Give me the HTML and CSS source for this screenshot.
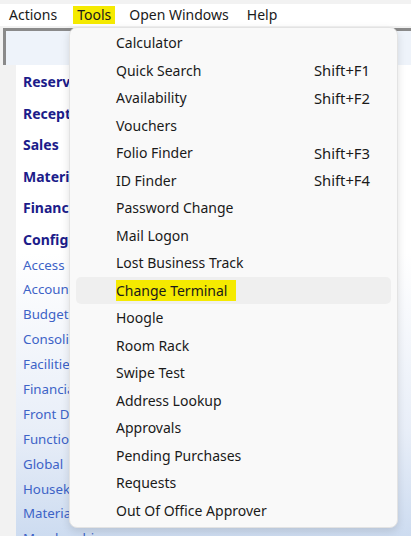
FILE: index.html
```html
<!DOCTYPE html>
<html>
<head>
<meta charset="utf-8">
<link rel="stylesheet" href="styles.css">
</head>
<body>
<div class="menubar">
  <span class="mi">Actions</span>
  <span class="mi active">Tools</span>
  <span class="mi">Open Windows</span>
  <span class="mi">Help</span>
</div>
<div class="workspace">
  <div class="frame-top"></div>
  <div class="nav">
    <div class="nav-main">
      <div class="nav-head">Reservations</div>
      <div class="nav-head">Reception</div>
      <div class="nav-head">Sales</div>
      <div class="nav-head">Materials</div>
      <div class="nav-head">Finance</div>
      <div class="nav-head">Configuration</div>
    </div>
    <div class="nav-links">
      <div class="nav-link">Access</div>
      <div class="nav-link">Accounts</div>
      <div class="nav-link">Budget</div>
      <div class="nav-link">Consolidation</div>
      <div class="nav-link">Facilities</div>
      <div class="nav-link">Financial</div>
      <div class="nav-link">Front Desk</div>
      <div class="nav-link">Functions</div>
      <div class="nav-link">Global</div>
      <div class="nav-link">Housekeeping</div>
      <div class="nav-link">Materials</div>
      <div class="nav-link">Membership</div>
    </div>
  </div>
</div>
<div class="dropdown">
  <div class="row"><span>Calculator</span></div>
  <div class="row"><span>Quick Search</span><span class="sc">Shift+F1</span></div>
  <div class="row"><span>Availability</span><span class="sc">Shift+F2</span></div>
  <div class="row"><span>Vouchers</span></div>
  <div class="row"><span>Folio Finder</span><span class="sc">Shift+F3</span></div>
  <div class="row"><span>ID Finder</span><span class="sc">Shift+F4</span></div>
  <div class="row"><span>Password Change</span></div>
  <div class="row"><span>Mail Logon</span></div>
  <div class="row"><span>Lost Business Track</span></div>
  <div class="row hover"><span class="mark">Change Terminal</span></div>
  <div class="row"><span>Hoogle</span></div>
  <div class="row"><span>Room Rack</span></div>
  <div class="row"><span>Swipe Test</span></div>
  <div class="row"><span>Address Lookup</span></div>
  <div class="row"><span>Approvals</span></div>
  <div class="row"><span>Pending Purchases</span></div>
  <div class="row"><span>Requests</span></div>
  <div class="row"><span>Out Of Office Approver</span></div>
</div>
</body>
</html>
```
FILE: styles.css
```css
html, body {
  margin: 0;
  padding: 0;
}
body {
  width: 411px;
  height: 536px;
  overflow: hidden;
  background: #f2f2f2;
  font-family: "Noto Sans", "Liberation Sans", sans-serif;
  position: relative;
}
.menubar {
  margin-top: 4px;
  height: 22px;
  background: #ffffff;
  display: flex;
  align-items: center;
  padding-left: 5px;
  font-size: 14px;
  color: #1a1a1a;
}
.mi {
  padding: 0 4px;
  margin-right: 10px;
  line-height: 18px;
}
.mi:first-child {
  margin-right: 12px;
}
.active {
  background: #f5ea00;
}
.workspace {
  margin-top: 2px;
  height: 510px;
  display: flex;
  flex-direction: column;
  overflow: hidden;
}
.frame-top {
  flex-shrink: 0;
  height: 34px;
  margin-left: 3px;
  border-top: 3px solid #8a8a8a;
  border-left: 3px solid #8a8a8a;
  background: #eef3fa;
}
.nav {
  flex: 1;
  display: flex;
  flex-direction: column;
  padding-left: 16px;
  background: #f2f2f2;
}
.nav-main {
  flex-shrink: 0;
  background: #ffffff;
  padding: 1px 0 0 7px;
}
.nav-head {
  height: 31.6px;
  line-height: 31.6px;
  font-weight: bold;
  font-size: 14px;
  color: #1c1c8a;
  white-space: nowrap;
}
.nav-links {
  flex: 1;
  margin-top: -3px;
  padding: 0 0 0 7px;
  background: linear-gradient(to bottom, #ffffff 0%, #e8eef8 60%, #c9d9ef 100%);
}
.nav-link {
  height: 24.9px;
  line-height: 24.9px;
  font-size: 13.3px;
  color: #3d63c7;
  white-space: nowrap;
}
.dropdown {
  position: absolute;
  left: 69px;
  top: 27px;
  width: 329px;
  height: 501px;
  background: #f9f9f9;
  border: 1px solid #e3e3e3;
  border-radius: 8px;
  box-shadow: 0 3px 8px rgba(0,0,0,0.12);
  padding-top: 1px;
  box-sizing: border-box;
  display: flex;
  flex-direction: column;
}
.row {
  flex-shrink: 0;
  height: 27.5px;
  margin: 0 6px;
  padding: 0 21px 0 40px;
  border-radius: 5px;
  display: flex;
  align-items: center;
  justify-content: space-between;
  font-size: 14px;
  color: #1a1a1a;
  white-space: nowrap;
}
.hover {
  background: #efefef;
}
.mark {
  background: #f5ea00;
  padding: 1px 9px 1px 0;
}
.sc {
  font-size: 14.8px;
}
```
